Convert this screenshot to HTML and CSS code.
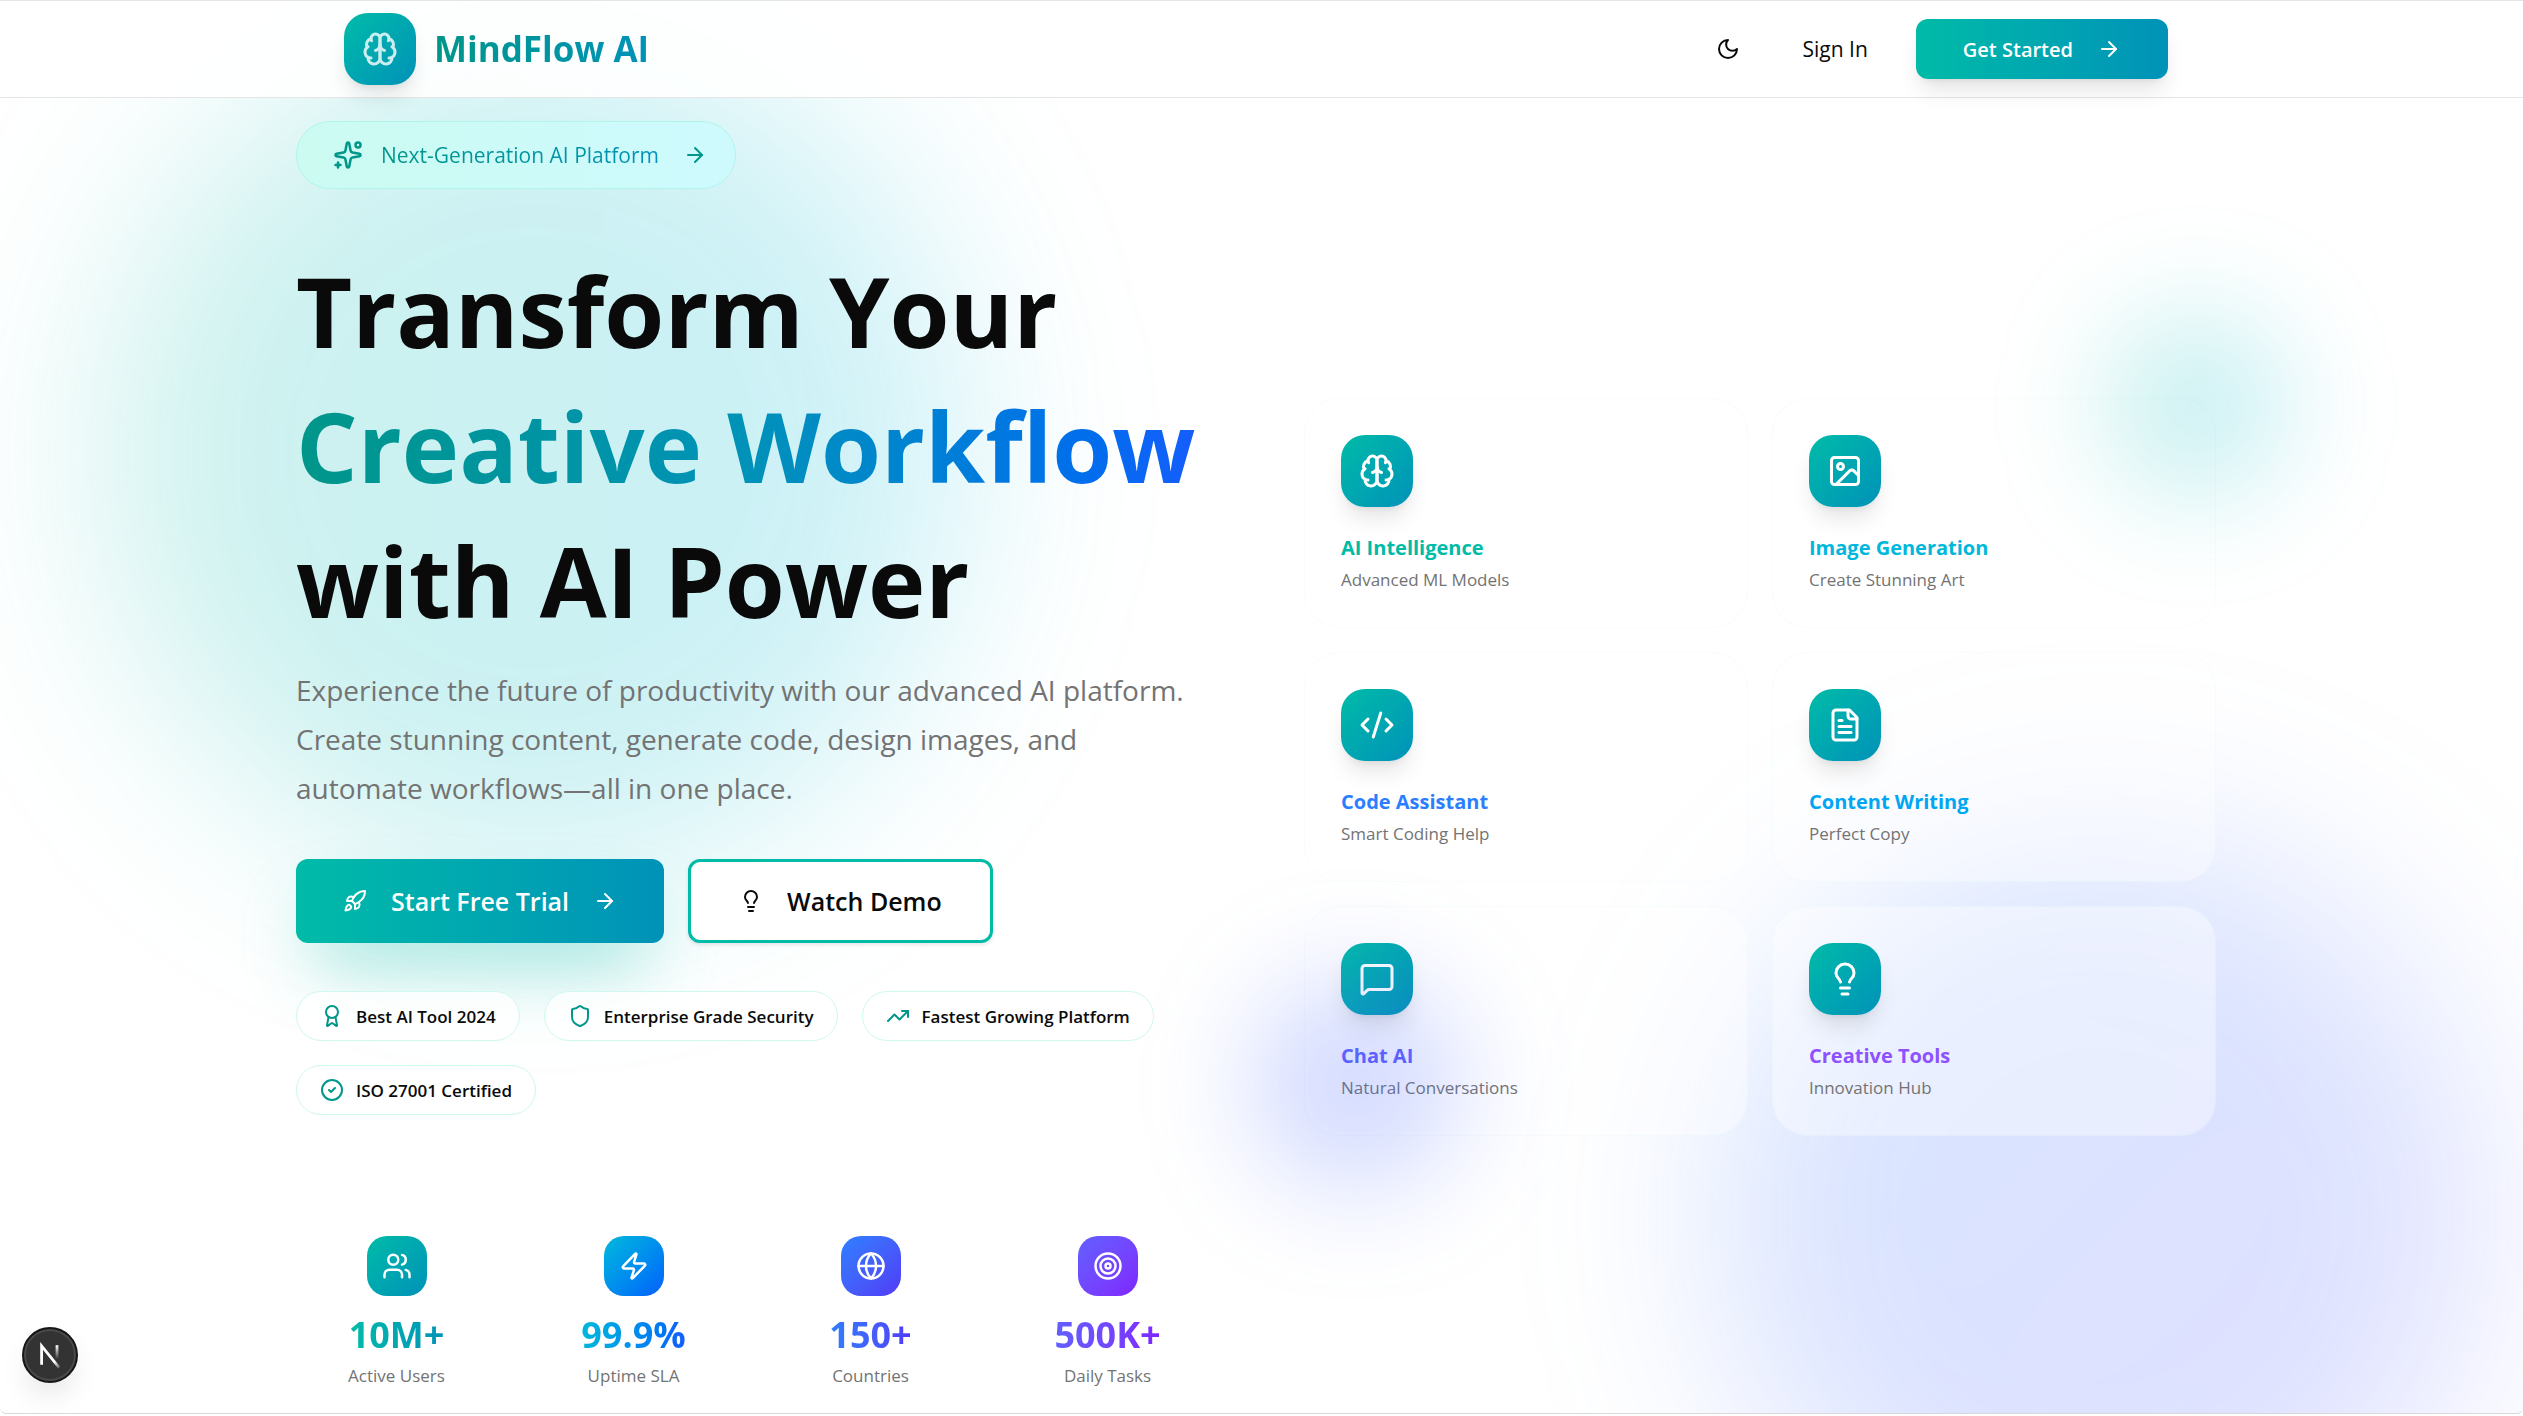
FILE: index.html
```html
<!DOCTYPE html>
<html lang="en">
<head>
<meta charset="utf-8">
<title>MindFlow AI</title>
<link rel="stylesheet" href="styles.css">
</head>
<body>
<svg class="sprite" aria-hidden="true">
  <symbol id="brain" viewBox="0 0 24 24"><path d="M12 5a3 3 0 1 0-5.997.125 4 4 0 0 0-2.526 5.77 4 4 0 0 0 .556 6.588A4 4 0 1 0 12 18Z"/><path d="M12 5a3 3 0 1 1 5.997.125 4 4 0 0 1 2.526 5.77 4 4 0 0 1-.556 6.588A4 4 0 1 1 12 18Z"/><path d="M15 13a4.5 4.5 0 0 1-3-4 4.5 4.5 0 0 1-3 4"/><path d="M17.599 6.5a3 3 0 0 0 .399-1.375"/><path d="M6.003 5.125A3 3 0 0 0 6.401 6.5"/><path d="M3.477 10.896a4 4 0 0 1 .585-.396"/><path d="M19.938 10.5a4 4 0 0 1 .585.396"/><path d="M6 18a4 4 0 0 1-1.967-.516"/><path d="M19.967 17.484A4 4 0 0 1 18 18"/></symbol>
  <symbol id="moon" viewBox="0 0 24 24"><path d="M12 3a6 6 0 0 0 9 9 9 9 0 1 1-9-9Z"/></symbol>
  <symbol id="arrow" viewBox="0 0 24 24"><path d="M5 12h14"/><path d="m12 5 7 7-7 7"/></symbol>
  <symbol id="sparkles" viewBox="0 0 24 24"><path d="M11.017 2.814a1 1 0 0 1 1.966 0l1.051 5.558a2 2 0 0 0 1.594 1.594l5.558 1.051a1 1 0 0 1 0 1.966l-5.558 1.051a2 2 0 0 0-1.594 1.594l-1.051 5.558a1 1 0 0 1-1.966 0l-1.051-5.558a2 2 0 0 0-1.594-1.594l-5.558-1.051a1 1 0 0 1 0-1.966l5.558-1.051a2 2 0 0 0 1.594-1.594z"/><circle cx="20" cy="4" r="2"/><path d="M4 18v4"/><path d="M2 20h4"/></symbol>
  <symbol id="rocket" viewBox="0 0 24 24"><path d="M4.5 16.5c-1.5 1.26-2 5-2 5s3.74-.5 5-2c.71-.84.7-2.13-.09-2.91a2.18 2.18 0 0 0-2.91-.09z"/><path d="m12 15-3-3a22 22 0 0 1 2-3.95A12.88 12.88 0 0 1 22 2c0 2.72-.78 7.5-6 11a22.35 22.35 0 0 1-4 2z"/><path d="M9 12H4s.55-3.03 2-4c1.62-1.08 5 0 5 0"/><path d="M12 15v5s3.03-.55 4-2c1.08-1.62 0-5 0-5"/></symbol>
  <symbol id="bulb" viewBox="0 0 24 24"><path d="M15 14c.2-1 .7-1.7 1.5-2.5 1-.9 1.5-2.2 1.5-3.5A6 6 0 0 0 6 8c0 1 .2 2.2 1.5 3.5.7.7 1.3 1.5 1.5 2.5"/><path d="M9 18h6"/><path d="M10 22h4"/></symbol>
  <symbol id="award" viewBox="0 0 24 24"><path d="m15.477 12.89 1.515 8.526a.5.5 0 0 1-.81.47l-3.58-2.687a1 1 0 0 0-1.197 0l-3.586 2.686a.5.5 0 0 1-.81-.469l1.514-8.526"/><circle cx="12" cy="8" r="6"/></symbol>
  <symbol id="shield" viewBox="0 0 24 24"><path d="M20 13c0 5-3.5 7.5-7.66 8.95a1 1 0 0 1-.67-.01C7.5 20.5 4 18 4 13V6a1 1 0 0 1 1-1c2 0 4.5-1.2 6.24-2.72a1.17 1.17 0 0 1 1.52 0C14.51 3.81 17 5 19 5a1 1 0 0 1 1 1z"/></symbol>
  <symbol id="trend" viewBox="0 0 24 24"><path d="M22 7 13.5 15.5 8.5 10.5 2 17"/><path d="M16 7h6v6"/></symbol>
  <symbol id="check" viewBox="0 0 24 24"><circle cx="12" cy="12" r="10"/><path d="m9 12 2 2 4-4"/></symbol>
  <symbol id="users" viewBox="0 0 24 24"><path d="M16 21v-2a4 4 0 0 0-4-4H6a4 4 0 0 0-4 4v2"/><circle cx="9" cy="7" r="4"/><path d="M22 21v-2a4 4 0 0 0-3-3.87"/><path d="M16 3.13a4 4 0 0 1 0 7.75"/></symbol>
  <symbol id="zap" viewBox="0 0 24 24"><path d="M4 14a1 1 0 0 1-.78-1.63l9.9-10.2a.5.5 0 0 1 .86.46l-1.92 6.02A1 1 0 0 0 13 10h7a1 1 0 0 1 .78 1.63l-9.9 10.2a.5.5 0 0 1-.86-.46l1.92-6.02A1 1 0 0 0 11 14z"/></symbol>
  <symbol id="globe" viewBox="0 0 24 24"><circle cx="12" cy="12" r="10"/><path d="M12 2a14.5 14.5 0 0 0 0 20 14.5 14.5 0 0 0 0-20"/><path d="M2 12h20"/></symbol>
  <symbol id="target" viewBox="0 0 24 24"><circle cx="12" cy="12" r="10"/><circle cx="12" cy="12" r="6"/><circle cx="12" cy="12" r="2"/></symbol>
  <symbol id="image" viewBox="0 0 24 24"><rect x="3" y="3" width="18" height="18" rx="2"/><circle cx="9" cy="9" r="2"/><path d="m21 15-3.086-3.086a2 2 0 0 0-2.828 0L6 21"/></symbol>
  <symbol id="code" viewBox="0 0 24 24"><path d="m18 16 4-4-4-4"/><path d="m6 8-4 4 4 4"/><path d="m14.5 4-5 16"/></symbol>
  <symbol id="file" viewBox="0 0 24 24"><path d="M15 2H6a2 2 0 0 0-2 2v16a2 2 0 0 0 2 2h12a2 2 0 0 0 2-2V7Z"/><path d="M14 2v4a2 2 0 0 0 2 2h4"/><path d="M10 9H8"/><path d="M16 13H8"/><path d="M16 17H8"/></symbol>
  <symbol id="chat" viewBox="0 0 24 24"><path d="M22 17a2 2 0 0 1-2 2H6.828a2 2 0 0 0-1.414.586l-2.202 2.202A.71.71 0 0 1 2 21.286V5a2 2 0 0 1 2-2h16a2 2 0 0 1 2 2z"/></symbol>
</svg>
<div class="page">
  <div class="glow glow-teal"></div>
  <div class="glow glow-indigo"></div>

  <header class="header">
    <div class="header-inner">
      <a class="brand" href="#">
        <span class="tile"><svg class="icon-lg brand-icon"><use href="#brain"/></svg></span>
        <span class="brand-name">MindFlow AI</span>
      </a>
      <nav class="nav">
        <button class="icon-button" aria-label="Toggle theme"><svg class="icon"><use href="#moon"/></svg></button>
        <a class="sign-in" href="#">Sign In</a>
        <button class="button button-small">Get Started<svg class="icon"><use href="#arrow"/></svg></button>
      </nav>
    </div>
  </header>

  <main class="hero">
    <section class="intro">
      <a class="badge" href="#">
        <svg class="icon-md"><use href="#sparkles"/></svg>
        <span class="badge-text">Next-Generation AI Platform</span>
        <svg class="icon"><use href="#arrow"/></svg>
      </a>
      <h1 class="title">Transform Your<br><span class="title-accent">Creative Workflow</span><br>with AI Power</h1>
      <p class="lead">Experience the future of productivity with our advanced AI platform. Create stunning content, generate code, design images, and automate workflows—all in one place.</p>
      <div class="actions">
        <button class="button button-large"><svg class="icon"><use href="#rocket"/></svg>Start Free Trial<svg class="icon"><use href="#arrow"/></svg></button>
        <button class="button-outline"><svg class="icon"><use href="#bulb"/></svg>Watch Demo</button>
      </div>
      <ul class="pills">
        <li class="pill"><svg class="icon"><use href="#award"/></svg>Best AI Tool 2024</li>
        <li class="pill"><svg class="icon"><use href="#shield"/></svg>Enterprise Grade Security</li>
        <li class="pill"><svg class="icon"><use href="#trend"/></svg>Fastest Growing Platform</li>
        <li class="pill"><svg class="icon"><use href="#check"/></svg>ISO 27001 Certified</li>
      </ul>
      <div class="stats">
        <div class="stat stat-teal"><span class="stat-tile"><svg class="icon-md"><use href="#users"/></svg></span><strong class="stat-value">10M+</strong><span class="stat-label">Active Users</span></div>
        <div class="stat stat-cyan"><span class="stat-tile"><svg class="icon-md"><use href="#zap"/></svg></span><strong class="stat-value">99.9%</strong><span class="stat-label">Uptime SLA</span></div>
        <div class="stat stat-blue"><span class="stat-tile"><svg class="icon-md"><use href="#globe"/></svg></span><strong class="stat-value">150+</strong><span class="stat-label">Countries</span></div>
        <div class="stat stat-indigo"><span class="stat-tile"><svg class="icon-md"><use href="#target"/></svg></span><strong class="stat-value">500K+</strong><span class="stat-label">Daily Tasks</span></div>
      </div>
    </section>

    <section class="features">
      <article class="card"><span class="tile"><svg class="icon-lg"><use href="#brain"/></svg></span><h2 class="card-title teal">AI Intelligence</h2><p class="card-text">Advanced ML Models</p></article>
      <article class="card"><span class="tile"><svg class="icon-lg"><use href="#image"/></svg></span><h2 class="card-title cyan">Image Generation</h2><p class="card-text">Create Stunning Art</p></article>
      <article class="card"><span class="tile"><svg class="icon-lg"><use href="#code"/></svg></span><h2 class="card-title blue">Code Assistant</h2><p class="card-text">Smart Coding Help</p></article>
      <article class="card"><span class="tile"><svg class="icon-lg"><use href="#file"/></svg></span><h2 class="card-title sky">Content Writing</h2><p class="card-text">Perfect Copy</p></article>
      <article class="card"><span class="tile"><svg class="icon-lg"><use href="#chat"/></svg></span><h2 class="card-title indigo">Chat AI</h2><p class="card-text">Natural Conversations</p></article>
      <article class="card"><span class="tile"><svg class="icon-lg"><use href="#bulb"/></svg></span><h2 class="card-title violet">Creative Tools</h2><p class="card-text">Innovation Hub</p></article>
      <div class="orb orb-teal"></div>
      <div class="orb orb-indigo"></div>
    </section>
  </main>

  <button class="dev-badge" aria-label="Open developer tools">
    <svg class="dev-logo" viewBox="0 0 20 20">
      <defs><linearGradient id="fade-stem" x1="0" y1="0" x2="0" y2="1"><stop offset="0" stop-color="#fff"/><stop offset="1" stop-color="#fff" stop-opacity="0"/></linearGradient>
      <linearGradient id="fade-slash" x1="3" y1="2" x2="18" y2="20" gradientUnits="userSpaceOnUse"><stop offset=".7" stop-color="#fff"/><stop offset="1" stop-color="#fff" stop-opacity="0"/></linearGradient></defs>
      <path d="M4 17V3.500L16.500 19" fill="none" stroke="url(#fade-slash)" stroke-width="2"/>
      <rect x="14" y="3" width="2" height="10" fill="url(#fade-stem)" stroke="none"/>
    </svg>
  </button>
</div>
</body>
</html>
```
FILE: styles.css
```css
* { box-sizing: border-box; }

body {
  margin: 0;
  background: #fff;
  color: #0a0a0a;
  font-family: "Open Sans", "Noto Sans", sans-serif;
  font-size: 21px;
}

h1, h2, p, ul { margin: 0; padding: 0; }
a { color: inherit; text-decoration: none; }
button { font: inherit; color: inherit; border: 0; background: none; cursor: pointer; }

svg { fill: none; stroke: currentColor; stroke-width: 2; stroke-linecap: round; stroke-linejoin: round; flex: none; }
.sprite { display: none; }
.icon { width: 24px; height: 24px; }
.icon-md { width: 30px; height: 30px; }
.icon-lg { width: 36px; height: 36px; }

.page {
  position: relative;
  min-height: 1414px;
  overflow: hidden;
  padding-right: 11px;
  border-top: 1px solid #e5e5e5;
  border-bottom: 1px solid #d9d9d9;
  border-radius: 0 0 6px 6px;
}

/* Background glows */
.glow, .orb { position: absolute; border-radius: 50%; pointer-events: none; }
.glow { filter: blur(96px); }
.glow-teal { width: 860px; height: 860px; left: 104px; top: 22px; background: linear-gradient(to right in oklab, rgb(0 187 167 / .2), rgb(0 184 219 / .2)); }
.glow-indigo { width: 768px; height: 768px; right: 40px; bottom: -188px; background: linear-gradient(to bottom right in oklab, rgb(43 127 255 / .2), rgb(97 95 255 / .2)); }

/* Header */
.header { position: relative; z-index: 1; border-bottom: 1px solid #e5e5e5; margin-right: -11px; padding-right: 11px; background: rgb(255 255 255 / .9); }
.header-inner { display: flex; align-items: center; justify-content: space-between; max-width: 1920px; height: 96px; margin: 0 auto; padding: 0 48px; }
.brand { display: flex; align-items: center; gap: 18px; }
.brand-icon { opacity: .8; }
.brand-name {
  font-size: 35px; font-weight: 700; line-height: 48px; color: transparent;
  background: linear-gradient(to right in oklab, #009689, #0092b8); background-clip: text;
}
.nav { display: flex; align-items: center; gap: 24px; }
.icon-button { display: grid; place-items: center; width: 54px; height: 54px; padding: 0; }
.sign-in { padding: 0 24px; font-weight: 500; }

.tile {
  display: grid; place-items: center; width: 72px; height: 72px; border-radius: 24px; color: #fff;
  background: linear-gradient(to bottom right in oklab, #00bba7, #0092b8);
  box-shadow: 0 15px 22px -4px rgb(0 0 0 / .1), 0 6px 9px -6px rgb(0 0 0 / .1);
}

.button {
  display: flex; align-items: center; border-radius: 12px; color: #fff;
  background: linear-gradient(to right in oklab, #00bba7, #0092b8);
}
.button-small { gap: 24px; height: 60px; padding: 0 47px; font-size: 20px; font-weight: 600; box-shadow: 0 15px 22px -4px rgb(0 0 0 / .1), 0 6px 9px -6px rgb(0 0 0 / .1); }
.button-large { gap: 24px; height: 84px; padding: 0 47px; font-size: 25px; font-weight: 600; box-shadow: 0 36px 72px -18px rgb(0 187 167 / .45); }
.button-outline {
  display: flex; align-items: center; gap: 24px; height: 84px; padding: 0 48px; font-size: 25px; font-weight: 600;
  background: #fff; border: 3px solid #00bba7; border-radius: 12px; box-shadow: 0 2px 4px rgb(0 0 0 / .1);
}

/* Hero */
.hero {
  position: relative; display: grid; grid-template-columns: minmax(0, 1fr) minmax(0, 1fr); align-items: center; column-gap: 96px;
  max-width: 1920px; margin: 0 auto; padding-top: 23px;
}
.intro { padding-bottom: 24px; }
.badge {
  display: flex; align-items: center; width: fit-content; height: 68px; padding: 0 28px 0 36px; border-radius: 34px;
  border: 1px solid #b0f5ea; background: linear-gradient(to right in oklab, #cbfbf1, #cefafe); color: #009689;
}
.badge-text {
  margin: 0 24px 0 18px; font-weight: 500; color: transparent;
  background: linear-gradient(to right in oklab, #009689, #0092b8); background-clip: text;
}
.title { margin-top: 54px; font-size: 97px; font-weight: 700; line-height: 135px; white-space: nowrap; }
.title-accent { color: transparent; background: linear-gradient(to right in oklab, #009689, #0092b8, #155dfc); background-clip: text; }
.lead { max-width: 904px; margin-top: 18px; font-size: 28px; line-height: 49px; color: #737373; }
.actions { display: flex; gap: 24px; margin-top: 46px; }
.pills { display: flex; flex-wrap: wrap; gap: 24px; margin-top: 48px; list-style: none; }
.pill {
  display: flex; align-items: center; gap: 12px; height: 50px; padding: 0 23px; border: 1px solid #cff8f1; border-radius: 25px;
  background: rgb(255 255 255 / .8); font-size: 17px; font-weight: 600;
}
.pill svg { color: #009689; }

.stats { display: grid; grid-template-columns: repeat(4, 1fr); gap: 36px; margin-top: 121px; }
.stat { display: flex; flex-direction: column; align-items: center; }
.stat-tile { display: grid; place-items: center; width: 60px; height: 60px; border-radius: 20px; color: #fff; background: linear-gradient(to bottom right in oklab, var(--from), var(--to)); }
.stat-value { margin-top: 12px; font-size: 36px; line-height: 54px; color: transparent; background: linear-gradient(to right in oklab, var(--from), var(--to)); background-clip: text; }
.stat-label { font-size: 17px; line-height: 27px; color: #737373; }
.stat-teal { --from: #00bba7; --to: #0092b8; }
.stat-cyan { --from: #00b8db; --to: #155dfc; }
.stat-blue { --from: #2b7fff; --to: #4f39f6; }
.stat-indigo { --from: #615fff; --to: #7f22fe; }

/* Feature cards */
.features { position: relative; display: grid; grid-template-columns: 1fr 1fr; gap: 24px; }
.card { height: 230px; padding: 36px; border-radius: 36px; border: 1px solid rgb(0 187 167 / .03); background: rgb(255 255 255 / .4); }
.card-title { margin-top: 26px; font-size: 20px; font-weight: 700; line-height: 30px; }
.card-text { font-size: 17px; line-height: 34px; color: #737373; }
.teal { color: #00bba7; }
.cyan { color: #00b8db; }
.blue { color: #2b7fff; }
.sky { color: #00a6f4; }
.indigo { color: #615fff; }
.violet { color: #8e51ff; }
.orb { filter: blur(54px); }
.orb-teal { width: 192px; height: 192px; right: -76px; top: -88px; background: linear-gradient(to right, rgb(0 187 167 / .2), rgb(0 184 219 / .2)); }
.orb-indigo { width: 216px; height: 216px; left: -56px; bottom: -56px; background: rgb(74 105 255 / .24); }

.dev-badge {
  position: absolute; left: 22px; bottom: 30px; display: grid; place-items: center; width: 56px; height: 56px; padding: 0;
  border: 2px solid #171717; border-radius: 50%; background: #333; box-shadow: inset 0 0 0 2px #4a4a4a, 0 16px 32px -8px rgb(0 0 0 / .14);
}
.dev-logo { width: 28px; height: 28px; stroke-linecap: butt; stroke-linejoin: miter; }
```
